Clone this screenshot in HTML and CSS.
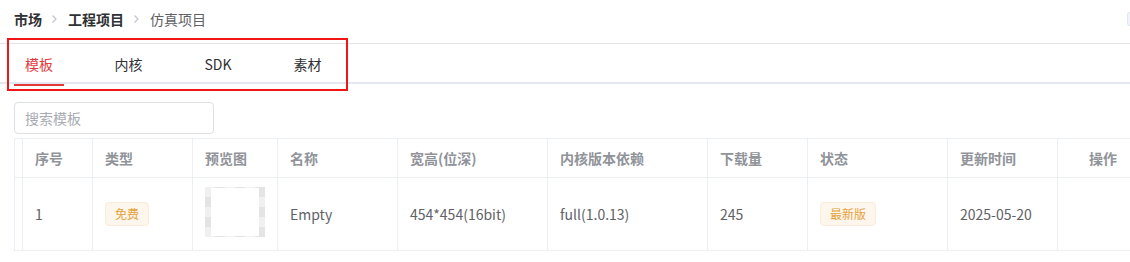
FILE: index.html
```html
<!DOCTYPE html>
<html lang="zh-CN">
<head>
<meta charset="utf-8">
<title>仿真项目</title>
<link rel="stylesheet" href="styles.css">
</head>
<body>
<div class="page">
  <div class="topbar">
    <nav class="crumbs">
      <span class="crumb strong">市场</span>
      <svg class="sep" width="7" height="10" viewBox="0 0 7 10"><path d="M1.5 1.5 L5 5 L1.5 8.5" fill="none" stroke="#c0c4cc" stroke-width="1.2"/></svg>
      <span class="crumb strong">工程项目</span>
      <svg class="sep" width="7" height="10" viewBox="0 0 7 10"><path d="M1.5 1.5 L5 5 L1.5 8.5" fill="none" stroke="#c0c4cc" stroke-width="1.2"/></svg>
      <span class="crumb">仿真项目</span>
    </nav>
    <span class="corner-btn"></span>
  </div>

  <div class="tabs-wrap">
    <div class="tabs">
      <div class="tab active">模板</div>
      <div class="tab">内核</div>
      <div class="tab">SDK</div>
      <div class="tab">素材</div>
    </div>
    <div class="highlight-box"></div>
  </div>

  <div class="search">
    <input class="search-input" type="text" placeholder="搜索模板">
  </div>

  <div class="table-wrap">
    <table class="grid">
      <colgroup>
        <col class="c0"><col class="c1"><col class="c2"><col class="c3"><col class="c4"><col class="c5"><col class="c6"><col class="c7"><col class="c8"><col class="c9"><col class="c10">
      </colgroup>
      <thead>
        <tr>
          <th></th>
          <th>序号</th>
          <th>类型</th>
          <th>预览图</th>
          <th>名称</th>
          <th>宽高(位深)</th>
          <th>内核版本依赖</th>
          <th>下载量</th>
          <th>状态</th>
          <th>更新时间</th>
          <th class="center">操作</th>
        </tr>
      </thead>
      <tbody>
        <tr>
          <td></td>
          <td>1</td>
          <td><span class="tag">免费</span></td>
          <td><div class="thumb"><div class="thumb-img"></div></div></td>
          <td>Empty</td>
          <td>454*454(16bit)</td>
          <td>full(1.0.13)</td>
          <td>245</td>
          <td><span class="tag">最新版</span></td>
          <td>2025-05-20</td>
          <td class="center"></td>
        </tr>
      </tbody>
    </table>
  </div>
</div>
</body>
</html>
```

FILE: styles.css
```css
* { box-sizing: border-box; }

html, body {
  margin: 0;
  padding: 0;
  background: #ffffff;
}

body {
  font-family: "Noto Sans CJK SC", "Noto Sans", sans-serif;
  font-size: 14px;
  color: #606266;
  overflow: hidden;
}

.page {
  width: 1130px;
  overflow: hidden;
}

.topbar {
  height: 44px;
  border-bottom: 1px solid #e4e4e4;
  display: flex;
  align-items: flex-start;
  justify-content: space-between;
  padding-left: 14px;
}

.crumbs {
  display: flex;
  align-items: center;
  height: 38px;
}

.crumb {
  color: #606266;
  font-size: 14px;
  line-height: 20px;
}

.crumb.strong {
  color: #303133;
  font-weight: 700;
}

.sep {
  margin: 0 10px 0 9px;
}

.corner-btn {
  display: block;
  width: 3px;
  height: 14px;
  margin-top: 12px;
  border: 1px solid #dfe6f2;
  border-right: none;
  border-radius: 3px 0 0 3px;
  background: #f0f4fa;
}

.tabs-wrap {
  position: relative;
  height: 40px;
  border-bottom: 2px solid #e4e7ed;
  padding-left: 14px;
}

.tabs {
  display: flex;
  gap: 39.5px;
  height: 40px;
}

.tab {
  width: 50px;
  height: 40px;
  line-height: 40px;
  text-align: center;
  color: #303133;
  font-size: 14px;
  position: relative;
}

.tab.active {
  color: #e4393c;
}

.tab.active::after {
  content: "";
  position: absolute;
  left: 0;
  right: 0;
  bottom: -2px;
  height: 2px;
  background: #e4393c;
}

.highlight-box {
  position: absolute;
  left: 7px;
  top: -6px;
  width: 341px;
  height: 53px;
  border: 2px solid #f01616;
  pointer-events: none;
}

.search {
  padding: 18px 0 0 14px;
}

.search-input {
  width: 200px;
  height: 32px;
  border: 1px solid #dcdfe6;
  border-radius: 4px;
  padding: 0 10px;
  font-family: inherit;
  font-size: 14px;
  color: #606266;
  outline: none;
  display: block;
}

.search-input::placeholder {
  color: #a8abb2;
}

.table-wrap {
  padding: 4px 0 0 14px;
}

.grid {
  border-collapse: collapse;
  table-layout: fixed;
  width: 1134px;
  border-top: 1px solid #ebeef5;
  border-left: 1px solid #ebeef5;
}

.c0 { width: 8px; }
.c1 { width: 70px; }
.c2 { width: 100px; }
.c3 { width: 85px; }
.c4 { width: 120px; }
.c5 { width: 150px; }
.c6 { width: 160px; }
.c7 { width: 100px; }
.c8 { width: 140px; }
.c9 { width: 110px; }
.c10 { width: 91px; }

.grid th,
.grid td {
  border-right: 1px solid #ebeef5;
  border-bottom: 1px solid #ebeef5;
  padding: 0 12px;
  text-align: left;
  white-space: nowrap;
  overflow: hidden;
}

.grid th:first-child,
.grid td:first-child {
  padding: 0;
}

.grid th {
  height: 39px;
  color: #909399;
  font-weight: 700;
  font-size: 14px;
}

.grid td {
  height: 73px;
  color: #606266;
  font-size: 14px;
}

.grid .center {
  text-align: center;
}

.tag {
  display: inline-block;
  height: 24px;
  line-height: 22px;
  padding: 0 9px;
  font-size: 12px;
  color: #e6a23c;
  background: #fdf6ec;
  border: 1px solid #faecd8;
  border-radius: 4px;
  vertical-align: middle;
}

.thumb {
  width: 60px;
  height: 50px;
  margin-bottom: 5px;
  display: flex;
  align-items: center;
  justify-content: center;
  background-color: #f0f0f0;
  background-image:
    linear-gradient(45deg, #e4e4e4 25%, transparent 25%, transparent 75%, #e4e4e4 75%),
    linear-gradient(45deg, #e4e4e4 25%, transparent 25%, transparent 75%, #e4e4e4 75%);
  background-size: 20px 20px;
  background-position: 0 0, 10px 10px;
}

.thumb-img {
  width: 48px;
  height: 48px;
  background: #ffffff;
}
```
